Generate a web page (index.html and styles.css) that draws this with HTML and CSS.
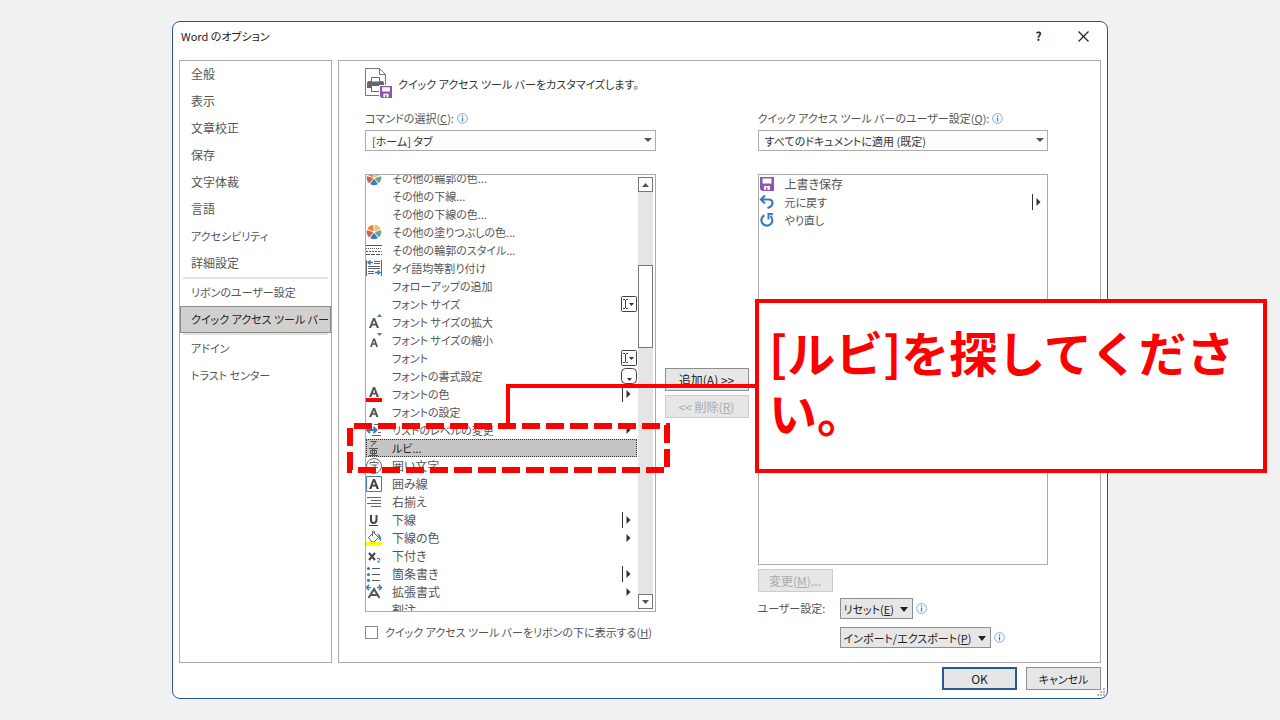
FILE: index.html
```html
<!DOCTYPE html>
<html lang="ja">
<head>
<meta charset="utf-8">
<title>Word のオプション</title>
<link rel="stylesheet" href="styles.css">
</head>
<body>
<svg class="defs" aria-hidden="true">
  <symbol id="wheel" viewBox="0 0 16 16">
    <path d="M8 8L1.5 5A7.2 7.2 0 0 1 7.5.8z" fill="#e8833a"/>
    <path d="M8 8L8.5.8A7.2 7.2 0 0 1 14.6 5z" fill="#ecc07c"/>
    <path d="M8 8L15 6A7.2 7.2 0 0 1 12.8 13.4z" fill="#6fa58e"/>
    <path d="M8 8L12 14A7.2 7.2 0 0 1 4 14z" fill="#3c7cbc"/>
    <path d="M8 8L3.2 13.4A7.2 7.2 0 0 1 1 6z" fill="#d65f43"/>
    <path d="M8 8V.5M8 8L15.5 5.5M8 8L12.6 14.5M8 8L3.4 14.5M8 8L.5 5.5" stroke="#fff" stroke-width=".6"/>
    <circle cx="8" cy="8" r="1.3" fill="#fff"/>
  </symbol>
  <symbol id="info" viewBox="0 0 11 11">
    <circle cx="5.5" cy="5.5" r="4.9" fill="#f6faff" stroke="#86ade0"/>
    <path d="M5.5 2.5v1.2M5.5 4.8v3.7" stroke="#3b73bd" stroke-width="1.2"/>
  </symbol>
  <symbol id="sub" viewBox="0 0 10 16"><path d="M4.500 4v8l4-4z" fill="#333"/></symbol>
  <symbol id="split" viewBox="0 0 10 16"><path d="M.5 0v16" stroke="#333"/><path d="M4.500 4v8l4-4z" fill="#333"/></symbol>
  <symbol id="edit" viewBox="0 0 16 16">
    <rect x=".5" y=".5" width="15" height="15" rx="1" fill="#fff" stroke="#444"/>
    <path d="M2 3.500h2M5 3.500h2M2 12.500h2M5 12.500h2M4.500 4v8" stroke="#444"/><path d="M8 7h5l-2.500 3z" fill="#333"/>
  </symbol>
  <symbol id="gallery" viewBox="0 0 16 16">
    <rect x=".5" y=".5" width="15" height="15" rx="4" fill="#fff" stroke="#444"/><path d="M6 10h5l-2.500 3z" fill="#333"/>
  </symbol>
  <symbol id="floppy" viewBox="0 0 14 14">
    <path d="M0 0h14v14H2L0 12z" fill="#8a57ad"/><path d="M2.500 1.500h9v5h-9zM4 9h6v4H7.500v-2.500H6V13H4z" fill="#fff"/>
  </symbol>
</svg>

<main class="stage">
  <section class="dialog" aria-label="Word のオプション">
    <header class="titlebar">
      <h1 class="title">Word のオプション</h1>
      <button class="cap help" aria-label="ヘルプ">?</button>
      <button class="cap" aria-label="閉じる"><svg width="11" height="11" viewBox="0 0 11 11"><path d="M.5.5l10 10M10.500.5l-10 10" stroke="#222" stroke-width="1.200"/></svg></button>
    </header>

    <div class="body">
      <nav class="nav">
        <button class="nav-item large">全般</button>
        <button class="nav-item large">表示</button>
        <button class="nav-item large">文章校正</button>
        <button class="nav-item large">保存</button>
        <button class="nav-item large">文字体裁</button>
        <button class="nav-item large">言語</button>
        <button class="nav-item">アクセシビリティ</button>
        <button class="nav-item large">詳細設定</button>
        <hr class="nav-sep">
        <button class="nav-item">リボンのユーザー設定</button>
        <button class="nav-item current">クイック アクセス ツール バー</button>
        <hr class="nav-sep">
        <button class="nav-item">アドイン</button>
        <button class="nav-item">トラスト センター</button>
      </nav>

      <div class="panel">
        <div class="panel-head">
          <svg width="28" height="32" viewBox="0 0 28 32">
            <path d="M.5.5h14l6 6v21H.5z" fill="#fff" stroke="#777"/><path d="M14.500.5v6h6" fill="none" stroke="#777"/>
            <path d="M2 15q0-2 2-2h13q2 0 2 2v5H2z" fill="#666"/>
            <path d="M6.500 13.500V9.500h8v4" fill="#fff" stroke="#666"/><path d="M6.500 17.500h8v6h-8z" fill="#fff" stroke="#666"/>
            <path d="M14 17h14v14H14z" fill="#fff"/><use href="#floppy" x="15" y="18" width="12" height="12"/>
          </svg>
          <h2 class="heading">クイック アクセス ツール バーをカスタマイズします。</h2>
        </div>

        <div class="columns">
          <div class="col">
            <div class="field-label"><label for="source">コマンドの選択(<u>C</u>):</label><svg class="info"><use href="#info"/></svg></div>
            <div class="combo"><select id="source"><option>[ホーム] タブ</option></select></div>
            <div class="listbox">
              <ul class="rows scrolled">
                <li class="row"><svg class="ico"><use href="#wheel"/></svg><span class="name">その他の輪郭の色...</span></li>
                <li class="row"><span class="ico"></span><span class="name">その他の下線...</span></li>
                <li class="row"><span class="ico"></span><span class="name">その他の下線の色...</span></li>
                <li class="row"><svg class="ico"><use href="#wheel"/></svg><span class="name">その他の塗りつぶしの色...</span></li>
                <li class="row"><svg class="ico" viewBox="0 0 16 16"><g stroke="#555"><path d="M0 3.500h16"/><path d="M0 6.500h16" stroke-dasharray="1 1"/><path d="M0 9.500h16" stroke-dasharray="2 1"/><path d="M0 12.500h16" stroke-dasharray="4 1"/></g></svg><span class="name">その他の輪郭のスタイル...</span></li>
                <li class="row"><svg class="ico" viewBox="0 0 16 16"><path d="M.5 0v16M15.500 0v16M8 1.500h6M8 3.500h6M2 6.500h12M2 8.500h12M2 11.500h6M2 13.500h6" stroke="#666"/><path d="M2 2.500h5M4.500.5l-2.500 2 2.500 2M9 12.500h5M11.500 10.500l2.500 2-2.500 2" fill="none" stroke="#3c7cbc" stroke-width="1.500"/></svg><span class="name">タイ語均等割り付け</span></li>
                <li class="row"><span class="ico"></span><span class="name">フォローアップの追加</span></li>
                <li class="row"><span class="ico"></span><span class="name">フォント サイズ</span><svg class="mark wide"><use href="#edit"/></svg></li>
                <li class="row"><svg class="ico" viewBox="0 0 16 16"><path d="M3 14L7 4h2l4 10h-2.200l-1-2.600H6.200l-1 2.600zM6.800 9.800h2.400L8 6.300z" fill="#555"/><path d="M11 3h5l-2.500-3z" fill="#3c7cbc"/></svg><span class="name">フォント サイズの拡大</span></li>
                <li class="row"><svg class="ico" viewBox="0 0 16 16"><path d="M4 15l3.200-8.500h1.800L12 15h-1.800l-.8-2.200H6.600L5.800 15zM7.100 11.300h1.800L8 8.500z" fill="#555"/><path d="M11 1h5l-2.500 3z" fill="#3c7cbc"/></svg><span class="name">フォント サイズの縮小</span></li>
                <li class="row"><span class="ico"></span><span class="name">フォント</span><svg class="mark wide"><use href="#edit"/></svg></li>
                <li class="row"><span class="ico"></span><span class="name">フォントの書式設定</span><svg class="mark wide"><use href="#gallery"/></svg></li>
                <li class="row"><svg class="ico" viewBox="0 0 16 16"><path d="M3 11L7 1h2l4 10h-2.400l-.9-2.500H6.300L5.400 11zM6.900 6.700h2.200L8 3.500z" fill="#555"/><path d="M0 12h16v4H0z" fill="#f00"/></svg><span class="name">フォントの色</span><svg class="mark"><use href="#split"/></svg></li>
                <li class="row"><svg class="ico" viewBox="0 0 16 16"><path d="M3 13l4-9h2l3.500 9h-2.300l-.8-2.200H6.300L5.400 13zM6.900 9.200h2L8 6.300z" fill="#555"/></svg><span class="name">フォントの設定</span></li>
                <li class="row"><svg class="ico" viewBox="0 0 16 16"><path d="M8 2.500h7M12 5.500h3M12 10.500h3M6 13.500h9" stroke="#666"/><path d="M1 8h9M4 5L1 8l3 3M7.500 5l3 3-3 3" fill="none" stroke="#3c7cbc" stroke-width="2"/></svg><span class="name">リストのレベルの変更</span><svg class="mark"><use href="#sub"/></svg></li>
                <li class="row selected"><svg class="ico" viewBox="0 0 16 16"><path d="M4.500 1.500h6L8 4M7.500 2.500Q8 5 5 6.500M3 8.500h9M3 15.500h9M4.500 10.500h6v3h-6zM6.500 8.500v7M8.500 8.500v7" fill="none" stroke="#555"/></svg><span class="name">ルビ...</span></li>
                <li class="row"><svg class="ico" viewBox="0 0 16 16"><circle cx="8" cy="8" r="7.500" fill="#fff" stroke="#666"/><path d="M8 2.500v2M4 6.500v-2h8v2M5.500 7h5L8 9v3.500H6.500M4 9.500h8" fill="none" stroke="#666"/></svg><span class="name large">囲い文字</span></li>
                <li class="row"><svg class="ico" viewBox="0 0 16 16"><path d="M.5.5h15v15H.5z" fill="#fff" stroke="#3c7cbc"/><path d="M3 13L7 3h2l4 10h-2.400l-.9-2.500H6.300L5.400 13zM6.900 8.700h2.200L8 5.500z" fill="#444"/></svg><span class="name large">囲み線</span></li>
                <li class="row"><svg class="ico" viewBox="0 0 16 16"><path d="M1 3.500h14M5 6.500h10M1 9.500h14M5 12.500h10" stroke="#666"/></svg><span class="name large">右揃え</span></li>
                <li class="row"><svg class="ico" viewBox="0 0 16 16"><path d="M5 3v5q0 3 2.500 3T10.500 8V3" fill="none" stroke="#444" stroke-width="2"/><path d="M3 13.500h9" stroke="#444"/></svg><span class="name large">下線</span><svg class="mark"><use href="#split"/></svg></li>
                <li class="row"><svg class="ico" viewBox="0 0 16 16"><path d="M2.500 7.500l5-5 5 5-4.500 4.500H6z" fill="#fff" stroke="#666"/><path d="M6.500 6V1.500Q7.500 0 8.500 1.500V3" fill="none" stroke="#666"/><path d="M11 3.500q5 1 4 8-2-1-2-4z" fill="#3c7cbc"/><path d="M0 12h16v4H0z" fill="#ff0"/></svg><span class="name large">下線の色</span><svg class="mark"><use href="#sub"/></svg></li>
                <li class="row"><svg class="ico" viewBox="0 0 16 16"><path d="M3 5l6 7M9 5l-6 7" stroke="#444" stroke-width="2"/><path d="M11 10.500h2.500v1.700L11.500 14H14" fill="none" stroke="#3c7cbc"/></svg><span class="name large">下付き</span></li>
                <li class="row"><svg class="ico" viewBox="0 0 16 16"><path d="M6 2.500h8M6 8.500h8M6 14.500h8" stroke="#555"/><g fill="#3c7cbc"><circle cx="2.500" cy="2.500" r="1.600"/><circle cx="2.500" cy="8.500" r="1.600"/><circle cx="2.500" cy="14.400" r="1.600"/></g></svg><span class="name large">箇条書き</span><svg class="mark"><use href="#split"/></svg></li>
                <li class="row"><svg class="ico" viewBox="0 0 16 16"><path d="M2.500 14L8 5l5.500 9M5 11h6" fill="none" stroke="#555" stroke-width="2"/><path d="M0 3.500h5M3 .8L.5 3.500 3 6.200M11 3.500h5M13 .8l2.500 2.700L13 6.200" fill="none" stroke="#3c7cbc" stroke-width="1.500"/></svg><span class="name large">拡張書式</span><svg class="mark"><use href="#sub"/></svg></li>
                <li class="row"><span class="ico"></span><span class="name large">割注</span></li>
              </ul>
              <div class="scrollbar">
                <button class="arrow" aria-label="上へ"><svg width="7" height="4" viewBox="0 0 7 4"><path d="M0 4h7L3.500 0z" fill="#555"/></svg></button>
                <div class="track"><div class="thumb"></div></div>
                <button class="arrow" aria-label="下へ"><svg width="7" height="4" viewBox="0 0 7 4"><path d="M0 0h7L3.500 4z" fill="#555"/></svg></button>
              </div>
            </div>
            <label class="below"><input type="checkbox"><span>クイック アクセス ツール バーをリボンの下に表示する(<u>H</u>)</span></label>
          </div>

          <div class="transfer">
            <button class="btn large">追加(<u>A</u>) &gt;&gt;</button>
            <button class="btn large" disabled>&lt;&lt; 削除(<u>R</u>)</button>
          </div>

          <div class="col">
            <div class="field-label"><label for="target">クイック アクセス ツール バーのユーザー設定(<u>Q</u>):</label><svg class="info"><use href="#info"/></svg></div>
            <div class="combo"><select id="target"><option>すべてのドキュメントに適用 (既定)</option></select></div>
            <div class="listbox">
              <ul class="rows">
                <li class="row"><svg class="ico" viewBox="0 0 16 16"><use href="#floppy" x="1" y="1" width="14" height="14"/></svg><span class="name large">上書き保存</span></li>
                <li class="row"><svg class="ico" viewBox="0 0 16 16"><path d="M2 5.500h7.500q4 0 4 3.500t-5 5M6 1.500l-4 4 4 4" fill="none" stroke="#3c7cbc" stroke-width="2.200"/></svg><span class="name">元に戻す</span><svg class="mark"><use href="#split"/></svg></li>
                <li class="row"><svg class="ico" viewBox="0 0 16 16"><path d="M5.500 3.200A5.500 5.500 0 1 0 11.500 4" fill="none" stroke="#3c7cbc" stroke-width="2.200"/><path d="M8.500 2h5.500M9.500 2v5.500" fill="none" stroke="#3c7cbc" stroke-width="2"/></svg><span class="name">やり直し</span></li>
              </ul>
            </div>
            <div class="options">
              <button class="btn large modify" disabled>変更(<u>M</u>)...</button>
              <span class="custom">ユーザー設定:</span>
              <div class="menu"><button class="btn drop">リセット(<u>E</u>)</button><svg class="info"><use href="#info"/></svg></div>
              <div class="menu export"><button class="btn drop">インポート/エクスポート(<u>P</u>)</button><svg class="info"><use href="#info"/></svg></div>
            </div>
          </div>
        </div>
      </div>
    </div>

    <footer class="footer">
      <button class="btn large primary">OK</button>
      <button class="btn">キャンセル</button>
    </footer>
    <svg class="grip" width="9" height="9" viewBox="0 0 9 9"><path d="M6 0h2v2H6zM3 3h2v2H3zM6 3h2v2H6zM0 6h2v2H0zM3 6h2v2H3zM6 6h2v2H6z" fill="#bbb"/></svg>
  </section>

  <svg class="highlight" width="323" height="50" viewBox="0 0 323 50"><path d="M7 3H323M320 2V46M-13 47H317M3 5V47" fill="none" stroke="#f00" stroke-width="6" stroke-dasharray="18 6"/></svg>
  <div class="connector"></div>
  <p class="callout">[ルビ]を探してください。</p>
</main>
</body>
</html>
```
FILE: styles.css
```css
* { box-sizing: border-box; }
body {
  margin: 0;
  background: #f1f1f1;
  color: #555;
  font: 11px/16px "Noto Sans CJK JP", sans-serif;
  font-feature-settings: "palt";
}
button, select, input { font: inherit; font-feature-settings: inherit; color: inherit; margin: 0; }
h1, h2, p, ul { margin: 0; padding: 0; font: inherit; }
svg { display: block; flex: none; }
.defs { position: absolute; width: 0; height: 0; }
.large { font-size: 12px; }

.stage { position: relative; display: flex; min-height: 100vh; padding: 21px 172px; }
.dialog {
  position: relative;
  flex: 1;
  display: flex;
  flex-direction: column;
  background: #fff;
  border: 1px solid #2b579a;
  border-radius: 8px;
  padding: 0 6px 8px;
}
.titlebar { display: flex; align-items: center; height: 28px; margin: 0 -5px 10px 0; color: #222; }
.title { flex: 1; padding-left: 2px; }
.cap { display: grid; place-items: center; width: 45px; height: 28px; padding: 0; border: 0; background: none; }
.cap.help { font-size: 12px; font-weight: bold; }

.body { flex: 1; display: grid; grid-template-columns: 153px 1fr; gap: 6px; }
.nav, .panel { border: 1px solid #ababab; }
.nav { display: flex; flex-direction: column; }
.nav-item { height: 27px; padding: 0 10px 1px; border: 1px solid transparent; background: none; text-align: left; white-space: nowrap; }
.nav-item.current { background: #d2d0ce; border-color: #8a8a86; color: #222; }
.nav-sep { width: 145px; height: 2px; margin: 0 auto; border: 0; background: #e2e2e2; }

.panel { display: flex; flex-direction: column; padding: 7px 52px 14px 26px; }
.panel-head { display: flex; align-items: center; gap: 5px; height: 32px; margin-bottom: 8px; color: #333; }
.columns { flex: 1; display: grid; grid-template-columns: 1fr 84px 1fr; gap: 9px; }
.col { display: flex; flex-direction: column; min-width: 0; }
.field-label { display: flex; align-items: center; gap: 3px; height: 20px; margin-bottom: 2px; white-space: nowrap; }
.info { width: 11px; height: 11px; }
.combo { position: relative; height: 21px; margin-bottom: 23px; }
.combo select { display: block; width: 100%; height: 100%; padding: 0 6px; border: 1px solid #ababab; border-radius: 0; background: #fdfdfd; color: #333; appearance: none; }
.combo::after, .drop::after { content: ""; border: 4px solid transparent; border-top-color: #555; border-bottom: 0; }
.combo::after { position: absolute; right: 4px; top: 8px; }

.listbox { flex: 1 1 0; display: flex; min-height: 120px; border: 1px solid #ababab; overflow: hidden; }
.rows { flex: 1; height: 0; list-style: none; }
.scrolled { margin-top: -6px; }
.row { display: flex; align-items: center; gap: 10px; height: 18px; padding-right: 5px; white-space: nowrap; }
.row.selected { background: #c6c5c3; color: #222; outline: 1px dotted #333; outline-offset: -1px; }
.ico { flex: none; width: 16px; height: 16px; }
.name { flex: 1; padding-bottom: 1px; }
.mark { width: 10px; height: 16px; }
.mark.wide { width: 16px; margin-right: -5px; }
.scrollbar { display: flex; flex-direction: column; width: 18px; padding: 2px 2px 2px 1px; background: #fff; }
.arrow { display: grid; place-items: center; height: 15px; padding: 0; border: 1px solid #777; background: #fff; }
.track { flex: 1; background: #e5e5e5; }
.thumb { height: 83px; margin-top: 73px; border: 1px solid #777; background: #fff; }
.below { display: flex; align-items: center; gap: 7px; height: 16px; margin: 12px 0 8px; white-space: nowrap; }
.below input { flex: none; width: 13px; height: 13px; border: 1px solid #888; background: #fff; appearance: none; }

.transfer { display: flex; flex-direction: column; justify-content: center; gap: 4px; padding: 66px 0 36px; }
.btn { height: 23px; padding: 0 6px; border: 1px solid #8e8e8e; background: #e6e6e6; color: #222; white-space: nowrap; }
.btn:disabled { border-color: #ccc; color: #aaa; }

.options { display: grid; grid-template-columns: 72px 1fr; column-gap: 10px; padding-top: 4px; }
.options .modify { grid-column: 1 / -1; width: 75px; margin-bottom: 6px; }
.custom { line-height: 21px; white-space: nowrap; }
.menu { display: flex; align-items: center; gap: 3px; }
.export { grid-column: 2; margin-top: 8px; }
.btn.drop { height: 21px; padding: 0 4px 0 3px; }
.drop::after { display: inline-block; margin-left: 6px; vertical-align: 2px; border-width: 5px 4px 0; border-top-color: #222; }

.footer { display: flex; justify-content: flex-end; gap: 9px; margin-top: 4px; }
.footer .btn { width: 75px; }
.footer .primary { border: 2px solid #2b579a; }
.grip { position: absolute; right: 1px; bottom: 1px; }

.highlight { position: absolute; left: 347px; top: 423px; }
.connector { position: absolute; left: 506px; top: 384px; width: 250px; height: 40px; border: solid #f00; border-width: 4px 0 0 4px; }
.callout {
  position: absolute;
  left: 755px;
  top: 299px;
  width: 512px;
  height: 174px;
  padding: 18px 10px;
  border: 4px solid #f00;
  background: #fff;
  color: #f00;
  font-size: 48px;
  font-weight: bold;
  line-height: 60px;
  font-feature-settings: normal;
}
```
